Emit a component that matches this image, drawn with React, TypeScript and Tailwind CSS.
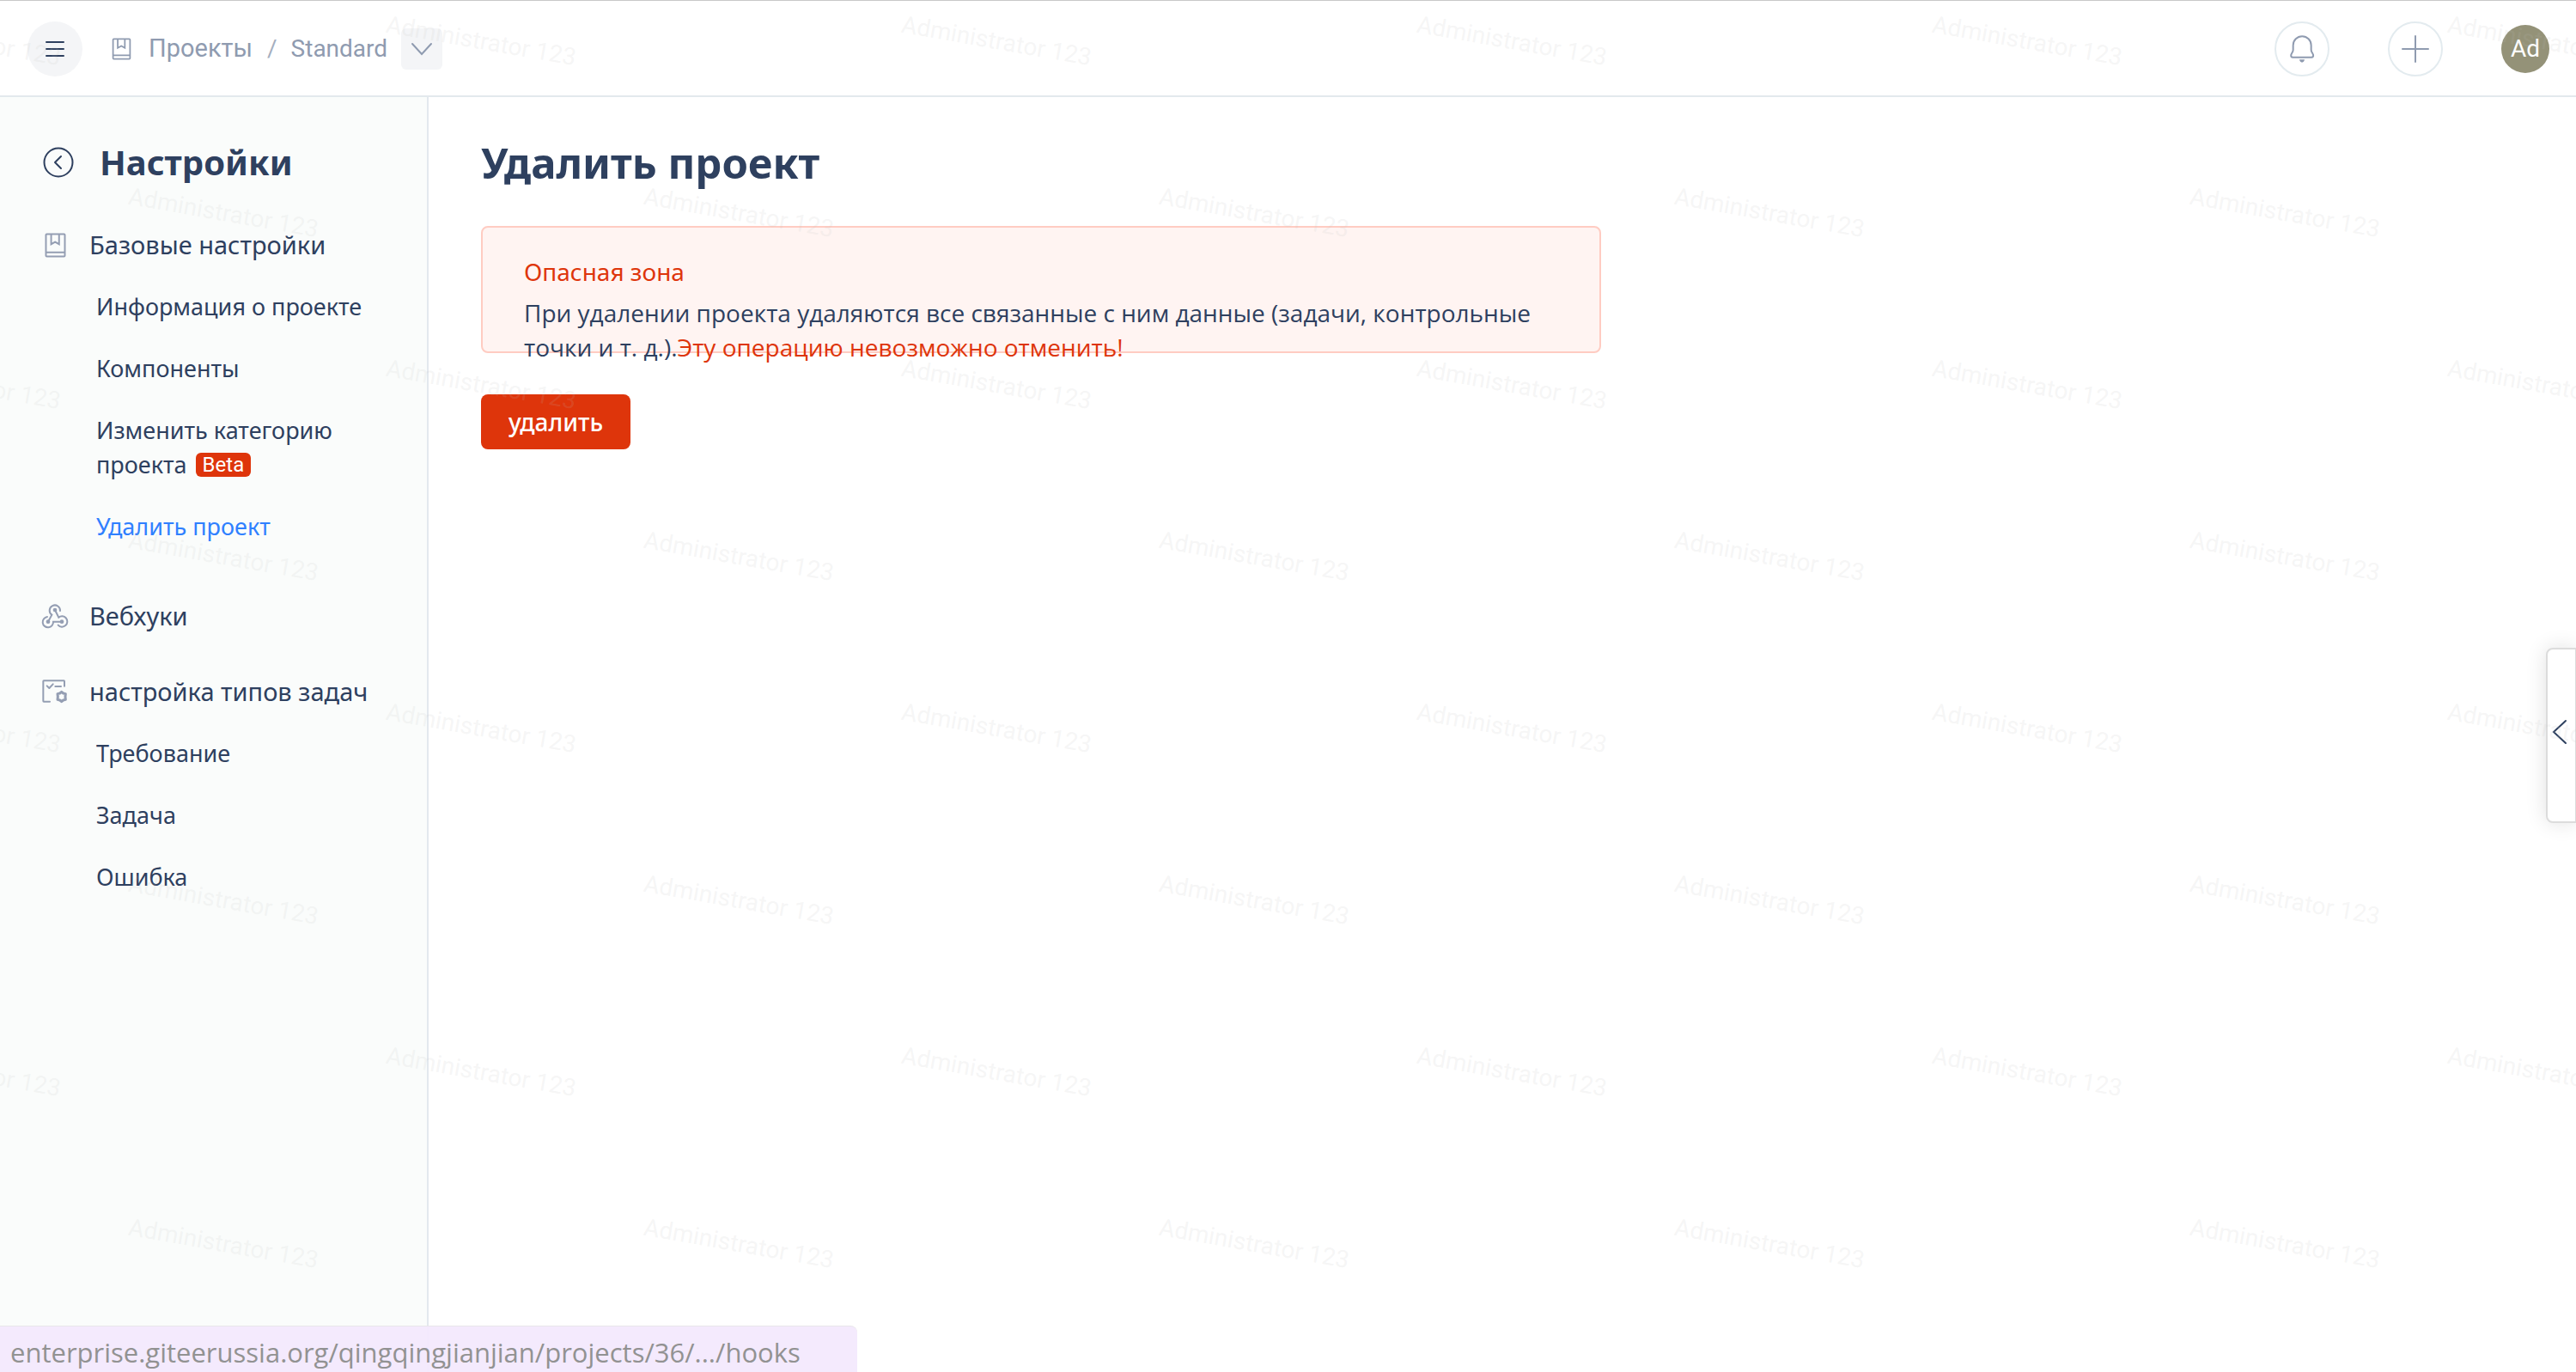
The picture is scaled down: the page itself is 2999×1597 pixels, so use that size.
import type { ReactNode } from "react";

const TEXT_FONT = "font-['Noto_Sans','Open_Sans',sans-serif]";

function BookIcon({ className }: { className: string }) {
  return (
    <svg viewBox="64 361 76 88" fill="none" stroke="currentColor" strokeWidth="6" className={className} aria-hidden="true">
      <rect x="68.500" y="365.500" width="67" height="79" rx="3" />
      <path d="M68 430H136M87 366V401L101 393L115 401V366" />
    </svg>
  );
}

function WebhookIcon() {
  return (
    <svg viewBox="24 36 96 90" fill="none" stroke="currentColor" strokeWidth="6" strokeLinecap="round" className="w-8 h-[30px]" aria-hidden="true">
      <path d="M48 101L61 77A18.500 18.500 0 1 1 90 63" />
      <path d="M72 60L85 86A18.500 18.500 0 1 1 83 113" />
      <path d="M96 101H66A18.500 18.500 0 1 1 45 84" />
      <g fill="currentColor" stroke="none">
        <circle cx="72" cy="60" r="7" />
        <circle cx="48" cy="101" r="7" />
        <circle cx="96" cy="101" r="7" />
      </g>
    </svg>
  );
}

function TaskTypeIcon() {
  return (
    <svg viewBox="28 301 96 90" fill="none" stroke="currentColor" strokeWidth="6" strokeLinecap="round" strokeLinejoin="round" className="w-8 h-[30px]" aria-hidden="true">
      <path d="M109 327V310Q109 308 107 308H37Q35 308 35 310V379Q35 381.500 37 381.500H58" />
      <path d="M48 326L56 334L69 320M77 328H97" />
      <path d="M99 347L105 352L113 354L112 364L113 374L105 376L99 381L93 376L85 374L86 364L85 354L93 352Z" strokeWidth="9" />
    </svg>
  );
}

function BellIcon() {
  return (
    <svg viewBox="195 120 90 102" fill="none" stroke="currentColor" strokeWidth="6" strokeLinejoin="round" className="w-[30px] h-[34px]" aria-hidden="true">
      <path d="M209 158A31 31 0 0 1 272 158V174Q272 180 276 185L279 191Q281 200 273 200H208Q200 200 202 191L205 185Q209 180 209 174Z" />
      <path d="M231 208H249Q247 218 240 218Q233 218 231 208Z" fill="currentColor" stroke="none" />
    </svg>
  );
}

function Watermark() {
  return (
    <div className="absolute inset-0 z-20 overflow-hidden pointer-events-none select-none font-[Roboto] text-[28px] leading-8 text-[#bebebe]/15" aria-hidden="true">
      {Array.from({ length: 8 }, (_, row) => (
        <div key={row} className={`flex h-[200px] pt-8 ${row % 2 ? "ml-[148px]" : "-ml-[152px]"}`}>
          {Array.from({ length: 6 }, (_, col) => (
            <div key={col} className="w-[600px] shrink-0">
              <span className="inline-block rotate-10">Administrator 123</span>
            </div>
          ))}
        </div>
      ))}
    </div>
  );
}

function Group({ icon, title, children }: { icon: ReactNode; title: string; children?: ReactNode }) {
  return (
    <section>
      <a href="#" className="flex h-12 items-center gap-6 text-[29px]">
        <span className="flex w-8 justify-center text-[#949eb3]">{icon}</span>
        {title}
      </a>
      {children && <ul className="pt-3 pb-1 pl-16 text-[27px] leading-10">{children}</ul>}
    </section>
  );
}

function Item({ children, active }: { children: ReactNode; active?: boolean }) {
  return (
    <li className="py-4">
      <a href="#" className={active ? "block text-[#2f80ff]" : "block"} aria-current={active ? "page" : undefined}>
        {children}
      </a>
    </li>
  );
}

export default function App() {
  return (
    <div className={`relative flex min-h-screen flex-col overflow-hidden bg-white text-[#2e405f] ${TEXT_FONT}`}>
      <header className="flex h-[113px] items-center justify-between border-t border-b-2 border-t-[#c8c8c8] border-b-[#e3e9ed] pt-0.5 pr-[31px] pl-8 font-[Roboto] text-[28px] text-[#8f9bb0]">
        <div className="flex items-center">
          <button type="button" aria-label="Меню" className="flex size-16 items-center justify-center rounded-full bg-[#f4f5f7] text-[#2e405f]">
            <svg viewBox="0 0 24 20" className="h-5 w-6" stroke="currentColor" strokeWidth="2" strokeLinecap="round" aria-hidden="true">
              <path d="M2 2H22M2 10H22M2 18H22" />
            </svg>
          </button>
          <nav className="ml-[34px] flex items-center" aria-label="Путь">
            <a href="#" className="flex items-center gap-5 text-[29px]">
              <BookIcon className="h-[26px] w-[23px]" />
              Проекты
            </a>
            <span className="ml-[17px] text-[#a5afc0]">/</span>
            <a href="#" className="ml-4">Standard</a>
          </nav>
          <button type="button" aria-label="Выбрать проект" className="ml-4 flex size-12 items-center justify-center rounded-md bg-[#f4f5f7]">
            <svg viewBox="0 0 26 16" className="h-4 w-[26px]" fill="none" stroke="currentColor" strokeWidth="2" strokeLinecap="round" aria-hidden="true">
              <path d="M2 2L13 14L24 2" />
            </svg>
          </button>
        </div>
        <div className="flex items-center gap-[68px]">
          <button type="button" aria-label="Уведомления" className="flex size-16 items-center justify-center rounded-full border-2 border-[#e3ebef]">
            <BellIcon />
          </button>
          <button type="button" aria-label="Создать" className="flex size-16 items-center justify-center rounded-full border-2 border-[#e3ebef]">
            <svg viewBox="0 0 32 32" className="size-8" stroke="currentColor" strokeWidth="2" strokeLinecap="round" aria-hidden="true">
              <path d="M1 16H31M16 1V31" />
            </svg>
          </button>
          <button type="button" aria-label="Профиль" className="flex size-14 items-center justify-center rounded-full bg-[#949278] text-white">
            Ad
          </button>
        </div>
      </header>

      <div className="flex grow">
        <aside className="w-[499px] shrink-0 border-r-2 border-[#e3e8ee] bg-[#fafcfb] pt-12 pl-12">
          <div className="flex h-14 items-center gap-[30px]">
            <a href="#" aria-label="Назад" className="ml-0.5">
              <svg viewBox="0 0 36 36" className="size-9" fill="none" stroke="currentColor" strokeWidth="2" strokeLinecap="round" strokeLinejoin="round" aria-hidden="true">
                <circle cx="18" cy="18" r="16.500" />
                <path d="M21 11L14 18L21 25" />
              </svg>
            </a>
            <h2 className="text-[40px] font-bold">Настройки</h2>
          </div>
          <nav className="mt-11 flex flex-col gap-10" aria-label="Настройки">
            <Group icon={<BookIcon className="h-[29px] w-[25px]" />} title="Базовые настройки">
              <Item>Информация о проекте</Item>
              <Item>Компоненты</Item>
              <Item>
                Изменить категорию проекта
                <span className="ml-2.5 inline-block rounded-md bg-[#de350b] px-2 align-[2px] font-[Roboto] text-2xl leading-7 text-white">Beta</span>
              </Item>
              <Item active>Удалить проект</Item>
            </Group>
            <Group icon={<WebhookIcon />} title="Вебхуки" />
            <Group icon={<TaskTypeIcon />} title="настройка типов задач">
              <Item>Требование</Item>
              <Item>Задача</Item>
              <Item>Ошибка</Item>
            </Group>
          </nav>
        </aside>

        <main className="grow pt-12 pr-16 pl-[61px] text-[28px] leading-10">
          <h1 className="flex h-14 items-center text-[49px] font-bold">Удалить проект</h1>
          <section className="mt-[46px] h-[148px] max-w-[1304px] rounded-lg border-2 border-[#ffccc2] bg-[#fff4f2] px-12 pt-[31px]">
            <h2 className="text-[#de350b]">Опасная зона</h2>
            <p className="mt-2 font-['Open_Sans','Noto_Sans',sans-serif]">
              При удалении проекта удаляются все связанные с ним данные (задачи, контрольные точки и т. д.).
              <span className="text-[#de350b]">Эту операцию невозможно отменить!</span>
            </p>
          </section>
          <button type="button" className="mt-12 h-16 rounded-lg bg-[#de350b] px-8 font-medium text-white">
            удалить
          </button>
        </main>
      </div>

      <button
        type="button"
        aria-label="Открыть панель"
        className="absolute top-[754px] right-0 z-10 flex h-[204px] w-[35px] items-center justify-center rounded-l-lg border-2 border-r border-[#dcdcdc] bg-white pr-1 pb-2 shadow-[0_0_24px_rgba(0,0,0,0.12)]"
      >
        <svg viewBox="0 0 18 30" className="h-[30px] w-[18px]" fill="none" stroke="currentColor" strokeWidth="2" strokeLinecap="round" aria-hidden="true">
          <path d="M16 2L2 15L16 28" />
        </svg>
      </button>

      <Watermark />

      <div className="absolute bottom-0 left-0 z-30 h-[54px] w-[998px] rounded-tr-lg border-t border-[#e8e6ea] bg-[#f3e9fd]/95 pt-2 pl-3 font-['Open_Sans','Noto_Sans',sans-serif] text-[31px] leading-[44px] text-[#929292]">
        enterprise.giteerussia.org/qingqingjianjian/projects/36/.../hooks
      </div>
    </div>
  );
}
